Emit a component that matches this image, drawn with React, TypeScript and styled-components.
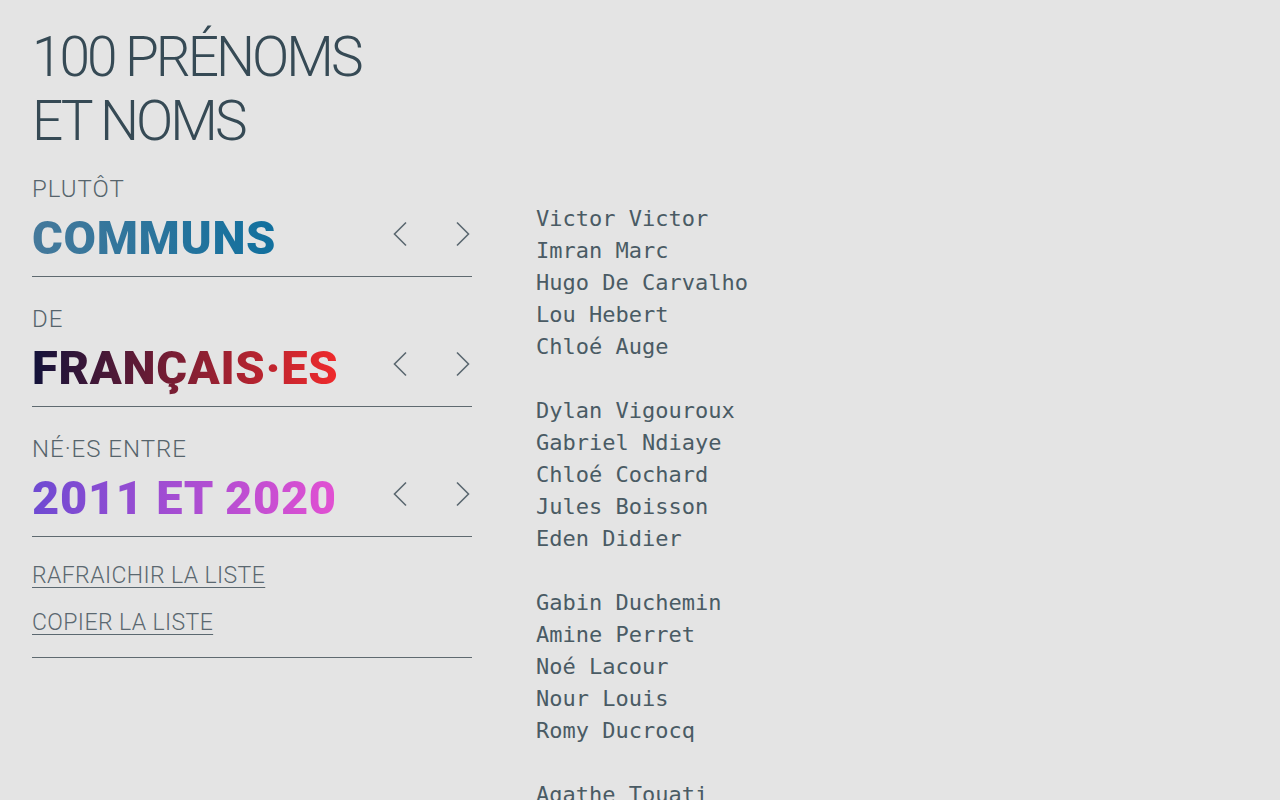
import React from "react";
import styled, { createGlobalStyle } from "styled-components";

// listes de noms affichées en groupes de cinq
const groups: string[][] = [
  ["Victor Victor", "Imran Marc", "Hugo De Carvalho", "Lou Hebert", "Chloé Auge"],
  ["Dylan Vigouroux", "Gabriel Ndiaye", "Chloé Cochard", "Jules Boisson", "Eden Didier"],
  ["Gabin Duchemin", "Amine Perret", "Noé Lacour", "Nour Louis", "Romy Ducrocq"],
  ["Agathe Touati", "Léa Martin", "Tom Bernard", "Inès Petit", "Sacha Robert"],
];

const filters = [
  { label: "PLUTÔT", value: "COMMUNS", from: "#45799b", to: "#11709e" },
  { label: "DE", value: "FRANÇAIS·ES", from: "#12123a", to: "#f02a2c" },
  { label: "NÉ·ES ENTRE", value: "2011 ET 2020", from: "#6e4ad2", to: "#e250d2" },
];

const Chevron: React.FC<{ dir: "left" | "right" }> = ({ dir }) => (
  <svg width="14" height="26" viewBox="0 0 14 26" fill="none">
    <polyline
      points={dir === "left" ? "13,1.5 1.5,13 13,24.5" : "1,1.5 12.5,13 1,24.5"}
      stroke="#5b6870"
      strokeWidth="1.6"
    />
  </svg>
);

const App: React.FC = () => {
  return (
    <>
      <GlobalStyle />
      <Page>
        <Sidebar>
          <Title>
            100 PRÉNOMS
            <br />
            ET NOMS
          </Title>
          {filters.map((f) => (
            <Section key={f.label}>
              <Label>{f.label}</Label>
              <ValueRow>
                <Value $from={f.from} $to={f.to}>
                  {f.value}
                </Value>
                <Nav>
                  <NavButton aria-label="précédent">
                    <Chevron dir="left" />
                  </NavButton>
                  <NavButton aria-label="suivant">
                    <Chevron dir="right" />
                  </NavButton>
                </Nav>
              </ValueRow>
            </Section>
          ))}
          <Actions>
            <ActionLink href="#">RAFRAICHIR LA LISTE</ActionLink>
            <ActionLink href="#">COPIER LA LISTE</ActionLink>
          </Actions>
        </Sidebar>
        <NameList>
          {groups.map((group, i) => (
            <NameGroup key={i}>
              {group.map((name) => (
                <Name key={name}>{name}</Name>
              ))}
            </NameGroup>
          ))}
        </NameList>
      </Page>
    </>
  );
};

export default App;

const GlobalStyle = createGlobalStyle`
  html, body {
    margin: 0;
    background: #e4e4e4;
  }
  body {
    font-family: Roboto, "Liberation Sans", sans-serif;
    color: #364a55;
  }
`;

const Page = styled.div`
  display: flex;
  align-items: flex-start;
  padding: 25px 32px 0;
  min-height: 775px;
`;

const Sidebar = styled.div`
  width: 440px;
  flex-shrink: 0;
`;

const Title = styled.h1`
  margin: 0 0 22px;
  font-size: 55px;
  line-height: 64px;
  font-weight: 300;
  letter-spacing: -3px;
  color: #364a55;
`;

const Section = styled.div`
  padding: 0 0 9px;
  border-bottom: 1px solid #5f6a70;

  & + & {
    padding-top: 28px;
  }
`;

const Label = styled.div`
  font-size: 24px;
  line-height: 28px;
  font-weight: 300;
  letter-spacing: 1px;
  color: #56646c;
`;

const ValueRow = styled.div`
  display: flex;
  align-items: center;
  justify-content: space-between;
  margin-top: 6px;
  height: 58px;
`;

const Value = styled.span<{ $from: string; $to: string }>`
  display: inline-block;
  font-size: 47px;
  line-height: 56px;
  font-weight: 900;
  letter-spacing: 0.7px;
  background: linear-gradient(90deg, ${(p) => p.$from}, ${(p) => p.$to});
  -webkit-background-clip: text;
  background-clip: text;
  color: transparent;
`;

const Nav = styled.div`
  display: flex;
  align-self: flex-start;
  margin-top: 12px;
  gap: 49px;
  padding-right: 2px;
`;

const NavButton = styled.button`
  display: flex;
  padding: 0;
  border: 0;
  background: none;
  cursor: pointer;
`;

const Actions = styled.div`
  display: flex;
  flex-direction: column;
  align-items: flex-start;
  gap: 21px;
  padding: 26px 0 21px;
  border-bottom: 1px solid #5f6a70;
`;

const ActionLink = styled.a`
  font-size: 23px;
  line-height: 26px;
  font-weight: 300;
  letter-spacing: 0.4px;
  color: #5b6870;
  text-decoration: underline;
  text-decoration-thickness: 1px;
  text-underline-offset: 4px;
`;

const NameList = styled.div`
  margin-left: 64px;
  padding-top: 178px;
  display: flex;
  flex-direction: column;
  gap: 32px;
`;

const NameGroup = styled.div`
  display: flex;
  flex-direction: column;
`;

const Name = styled.div`
  font-family: "DejaVu Sans Mono", "Liberation Mono", monospace;
  font-size: 22px;
  line-height: 32px;
  color: #4a5b64;
`;
